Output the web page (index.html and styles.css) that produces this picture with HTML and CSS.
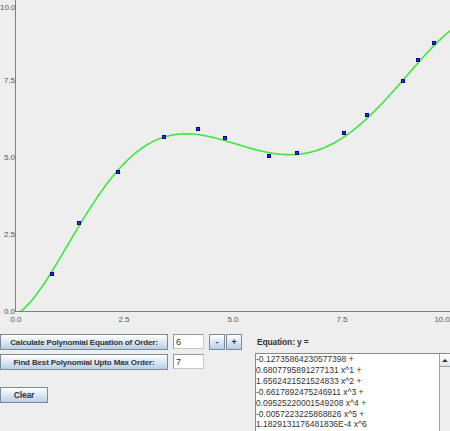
FILE: index.html
```html
<!DOCTYPE html>
<html>
<head>
<meta charset="utf-8">
<link rel="stylesheet" href="styles.css">
</head>
<body>
<div class="app">
  <svg class="chart" width="450" height="321" viewBox="0 0 450 321">
    <defs>
      <clipPath id="plot"><rect x="15" y="0" width="435" height="311"/></clipPath>
    </defs>
    <line class="axis" x1="15.5" y1="0" x2="15.5" y2="311.5"/>
    <line class="axis" x1="15" y1="311.5" x2="450" y2="311.5"/>
    <text class="lbl" x="0" y="10">10.0</text>
    <text class="lbl" x="15" y="83" text-anchor="end">7.5</text>
    <text class="lbl" x="15" y="160" text-anchor="end">5.0</text>
    <text class="lbl" x="15" y="237" text-anchor="end">2.5</text>
    <text class="lbl" x="15" y="314" text-anchor="end">0.0</text>
    <text class="lbl" x="16" y="322" text-anchor="middle">0.0</text>
    <text class="lbl" x="124" y="322" text-anchor="middle">2.5</text>
    <text class="lbl" x="233" y="322" text-anchor="middle">5.0</text>
    <text class="lbl" x="342" y="322" text-anchor="middle">7.5</text>
    <text class="lbl" x="450" y="322" text-anchor="end">10.0</text>
    <path id="curve" class="curve" clip-path="url(#plot)" d=""/>
    <g class="pts">
      <rect x="50.5" y="272.5" width="3" height="3"/>
      <rect x="77.5" y="221.5" width="3" height="3"/>
      <rect x="116.5" y="170.5" width="3" height="3"/>
      <rect x="162.5" y="135.5" width="3" height="3"/>
      <rect x="196.5" y="127.5" width="3" height="3"/>
      <rect x="223.5" y="136.5" width="3" height="3"/>
      <rect x="267.5" y="154.5" width="3" height="3"/>
      <rect x="295.5" y="151.5" width="3" height="3"/>
      <rect x="342.5" y="131.5" width="3" height="3"/>
      <rect x="365.5" y="113.5" width="3" height="3"/>
      <rect x="401.5" y="79.5" width="3" height="3"/>
      <rect x="416.5" y="58.5" width="3" height="3"/>
      <rect x="432.5" y="41.5" width="3" height="3"/>
    </g>
  </svg>
  <div class="controls">
    <div class="left">
      <div class="row">
        <button class="btn wide">Calculate Polynomial Equation of Order:</button>
        <input class="field" type="text" value="6">
        <div class="spin">
          <button class="btn small">-</button>
          <button class="btn small">+</button>
        </div>
      </div>
      <div class="row second">
        <button class="btn wide">Find Best Polynomial Upto Max Order:</button>
        <input class="field" type="text" value="7">
      </div>
      <button class="btn clear">Clear</button>
    </div>
    <div class="right">
      <div class="eqlabel">Equation: y =</div>
      <div class="area">
        <div class="lines">
          <div>-0.12735864230577398 +</div>
          <div>0.6807795891277131 x^1 +</div>
          <div>1.6562421521524833 x^2 +</div>
          <div>-0.6617892475246911 x^3 +</div>
          <div>0.09525220001549208 x^4 +</div>
          <div>-0.0057223225868826 x^5 +</div>
          <div>1.1829131176481836E-4 x^6</div>
        </div>
        <div class="scroll">
          <div class="arrow"><svg width="8" height="5" viewBox="0 0 8 5"><path d="M1 4 L4 1 L7 4 Z" fill="#333"/></svg></div>
        </div>
      </div>
    </div>
  </div>
</div>
<script src="script.js"></script>
</body>
</html>
```
FILE: styles.css
```css
html, body {
  margin: 0;
  padding: 0;
  background: #eeeeee;
}
.app {
  width: 450px;
  height: 431px;
  overflow: hidden;
  font-family: "Liberation Sans", Arial, sans-serif;
}
.chart {
  display: block;
  overflow: visible;
}
.axis {
  stroke: #808080;
  stroke-width: 1;
}
.lbl {
  font-family: "Liberation Sans", Arial, sans-serif;
  font-size: 8px;
  fill: #555555;
}
.curve {
  fill: none;
  stroke: #3de83d;
  stroke-width: 1.6;
}
.pts rect {
  fill: #2a2aff;
  stroke: #00008a;
  stroke-width: 1;
}
.controls {
  display: flex;
  padding-top: 13px;
}
.left {
  width: 255px;
  display: flex;
  flex-direction: column;
  align-items: flex-start;
}
.row {
  display: flex;
  align-items: flex-start;
}
.row.second {
  margin-top: 4px;
}
.btn {
  margin: 0;
  padding: 0;
  border: 1px solid #7a8a99;
  border-radius: 0;
  background: linear-gradient(to bottom, #ffffff 0%, #e6eef7 35%, #c9dbec 75%, #b8cfe5 100%);
  font-family: "Liberation Sans", Arial, sans-serif;
  font-weight: bold;
  font-size: 8px;
  color: #333333;
  letter-spacing: -0.15px;
  box-sizing: border-box;
}
.btn.wide {
  width: 168px;
  height: 16px;
}
.field {
  margin: 0 0 0 5px;
  width: 31px;
  height: 15px;
  box-sizing: border-box;
  border: 1px solid #9a9a9a;
  border-right-color: #c8c8c8;
  border-bottom-color: #c8c8c8;
  padding: 0 0 0 2px;
  font-family: "Liberation Sans", Arial, sans-serif;
  font-size: 9px;
  color: #333;
  background: #ffffff;
  outline: none;
}
.spin {
  display: flex;
  margin-left: 5px;
}
.btn.small {
  width: 16px;
  height: 16px;
  font-size: 9px;
}
.btn.small + .btn.small {
  margin-left: 1px;
}
.btn.clear {
  margin-top: 17px;
  width: 48px;
  height: 16px;
  font-size: 8.5px;
}
.right {
  flex: 1;
  display: flex;
  flex-direction: column;
}
.eqlabel {
  padding-left: 2px;
  height: 16px;
  line-height: 16px;
  font-size: 8.5px;
  font-weight: bold;
  color: #333333;
  letter-spacing: -0.15px;
}
.area {
  margin-top: 3px;
  height: 90px;
  display: flex;
  background: #ffffff;
  border: 1px solid #8a8a8a;
  border-right: none;
}
.lines {
  flex: 1;
  padding-top: 0;
  font-size: 8.5px;
  line-height: 10.9px;
  color: #333333;
  white-space: nowrap;
  overflow: hidden;
}
.scroll {
  width: 10px;
  background: #eeeeee;
  border-left: 1px solid #a0a0a0;
}
.arrow {
  height: 12px;
  display: flex;
  align-items: center;
  justify-content: center;
  background: linear-gradient(to bottom, #ffffff, #dde8f3);
  border-bottom: 1px solid #a0a0a0;
}
```
FILE: script.js
```js
(function () {
  var c = [-0.12735864230577398, 0.6807795891277131, 1.6562421521524833,
    -0.6617892475246911, 0.09525220001549208, -0.0057223225868826,
    1.1829131176481836E-4];
  var d = '';
  var started = false;
  for (var px = 15; px <= 450; px += 0.5) {
    var v = (px - 15) / 43.5;
    var y = 0, p = 1;
    for (var i = 0; i < c.length; i++) { y += c[i] * p; p *= v; }
    var py = 311 - y * 30.8;
    d += (started ? ' L' : 'M') + px.toFixed(2) + ' ' + py.toFixed(2);
    started = true;
  }
  document.getElementById('curve').setAttribute('d', d);
})();
```
